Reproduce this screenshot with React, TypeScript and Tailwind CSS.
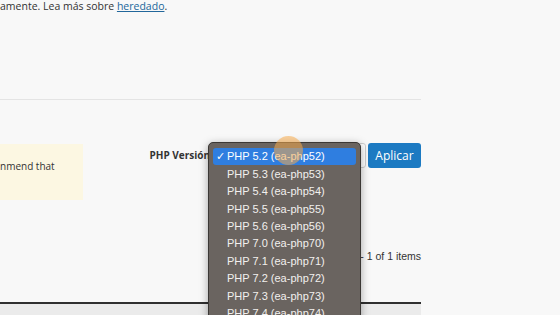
const versions = [
  { v: "5.2", id: "52" },
  { v: "5.3", id: "53" },
  { v: "5.4", id: "54" },
  { v: "5.5", id: "55" },
  { v: "5.6", id: "56" },
  { v: "7.0", id: "70" },
  { v: "7.1", id: "71" },
  { v: "7.2", id: "72" },
  { v: "7.3", id: "73" },
  { v: "7.4", id: "74" },
];

function VersionMenu() {
  return (
    <div className="absolute left-[208px] top-[142px] h-[200px] w-[153px] rounded-[5px] border border-[#3b3835] bg-[#6a6460] px-[4px] pt-[5px] shadow-[0_2px_8px_rgba(0,0,0,0.35)] font-['Liberation_Sans',sans-serif]">
      {versions.map((item, i) => (
        <div
          key={item.id}
          className={
            i === 0
              ? "flex h-[17.4px] items-center rounded-[3px] bg-[#2f7ee0] pl-[3px] text-[11px] text-white"
              : "flex h-[17.4px] items-center pl-[3px] text-[11px] text-[#f2f0ee]"
          }
        >
          <span className="w-[11px] text-[11px] leading-none">{i === 0 ? "✓" : ""}</span>
          <span>
            PHP {item.v} (ea-php{item.id})
          </span>
        </div>
      ))}
    </div>
  );
}

export default function App() {
  return (
    <div className="relative h-[315px] w-[560px] overflow-hidden bg-[#f8f8f8] font-['Open_Sans',sans-serif] text-[#333]">
      <div className="flex h-full w-[421px] flex-col">
        <p className="whitespace-nowrap text-[10.5px] leading-[12px]">
          amente. Lea más sobre{" "}
          <span className="text-[#22679b] underline">heredado</span>.
        </p>

        <div className="mt-[87px] border-t border-[#e4e4e4]" />

        <div className="mt-[43px] flex items-start justify-between">
          <div className="mt-[1px] h-[56px] w-[83px] bg-[#fcf7e2] pt-[14px] text-[10px] leading-[16px]">
            nmend that
          </div>
          <div className="flex items-center">
            <span className="text-[10px] font-bold leading-[25px]">PHP Versión</span>
            <div className="ml-[6px] flex h-[25px] w-[150px] items-center justify-end rounded-[3px] border border-[#cfcfcf] bg-white pr-[3px]">
              <span className="text-[7px] leading-none text-[#333]">▼</span>
            </div>
            <button className="ml-[2px] h-[25px] w-[53px] rounded-[3px] bg-[#1c7ac2] text-[12px] text-white">
              Aplicar
            </button>
          </div>
        </div>

        <div className="mt-[49px] text-right text-[10.5px] leading-[14px] font-['Liberation_Sans',sans-serif]">
          1 - 1 of 1 items
        </div>

        <div className="mt-[39px] border-t-2 border-[#2f2f2f]" />
        <div className="flex-1 bg-[#ebebeb]" />
      </div>

      <VersionMenu />

      <div className="absolute left-[274px] top-[136px] h-[29px] w-[29px] rounded-full bg-[#f6a94a]/55" />
    </div>
  );
}
